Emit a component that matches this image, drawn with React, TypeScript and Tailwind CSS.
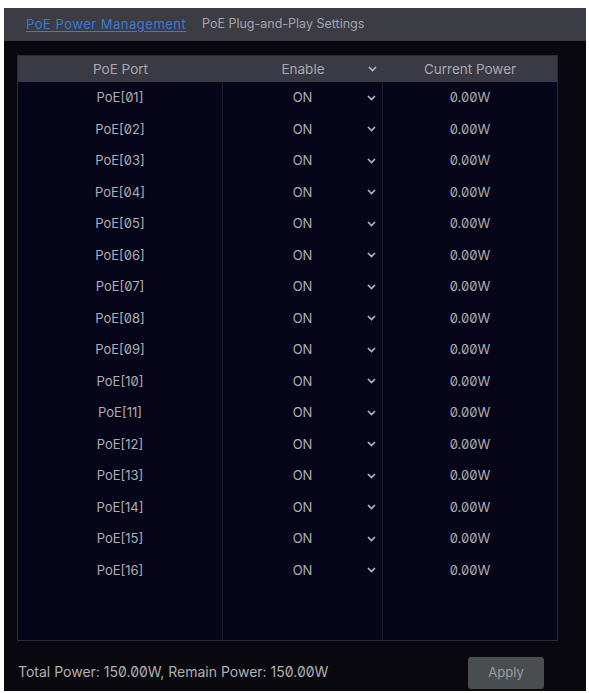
import React from "react";

const ports = Array.from({ length: 16 }, (_, i) => `PoE[${String(i + 1).padStart(2, "0")}]`);

function Chevron() {
  return (
    <svg width="9" height="6" viewBox="0 0 9 6" className="absolute right-[6px] top-1/2 -translate-y-1/2">
      <path d="M1 1 L4.5 4.5 L8 1" fill="none" stroke="#b8b8c0" strokeWidth="1.6" />
    </svg>
  );
}

export default function App() {
  return (
    <div className="w-[589px] h-[693px] bg-white pt-[8px] pl-[4px] slashed-zero" style={{ fontFamily: "Inter, 'Liberation Sans', sans-serif" }}>
      <div className="w-[582px] h-[683px] bg-[#09080e] flex flex-col">
        <div className="h-[33px] bg-[#3b3c44] flex items-center pl-[22px]">
          <span className="text-[#3a7ad0] underline underline-offset-2 tracking-[0.5px] text-[13px] w-[176px]">PoE Power Management</span>
          <span className="text-[#a4a4ac] text-[12.5px]">PoE Plug-and-Play Settings</span>
        </div>
        <div className="mt-[14px] ml-[13px] w-[541px] h-[586px] border border-[#2b2b34] bg-[#06051a] flex flex-col text-[13px] text-[#aeaeb2]">
          <div className="h-[26px] bg-[#3a3a44] grid grid-cols-[205px_160px_1fr] items-center text-[#a8a8b0] text-[13.5px]">
            <div className="text-center">PoE Port</div>
            <div className="text-center relative h-full flex items-center justify-center">
              Enable
              <Chevron />
            </div>
            <div className="text-center">Current Power</div>
          </div>
          <div className="flex-1 grid grid-cols-[205px_160px_1fr]">
            <div className="border-r border-[#1d1c2a] flex flex-col">
              {ports.map((p) => (
                <div key={p} className="h-[31.5px] flex items-center justify-center">{p}</div>
              ))}
            </div>
            <div className="border-r border-[#1d1c2a] flex flex-col">
              {ports.map((p) => (
                <div key={p} className="h-[31.5px] flex items-center justify-center relative">
                  ON
                  <Chevron />
                </div>
              ))}
            </div>
            <div className="flex flex-col">
              {ports.map((p) => (
                <div key={p} className="h-[31.5px] flex items-center justify-center">0.00W</div>
              ))}
            </div>
          </div>
        </div>
        <div className="flex-1 flex items-center justify-between pl-[14px] pr-[42px] pt-[14px]">
          <span className="text-[14px] text-[#b0b0b4] mb-[4px]">Total Power: 150.00W, Remain Power: 150.00W</span>
          <div className="w-[76px] h-[32px] rounded-[3px] bg-[#4a4d50] flex items-center justify-center text-[13px] text-[#9c9ea2]">Apply</div>
        </div>
      </div>
    </div>
  );
}
